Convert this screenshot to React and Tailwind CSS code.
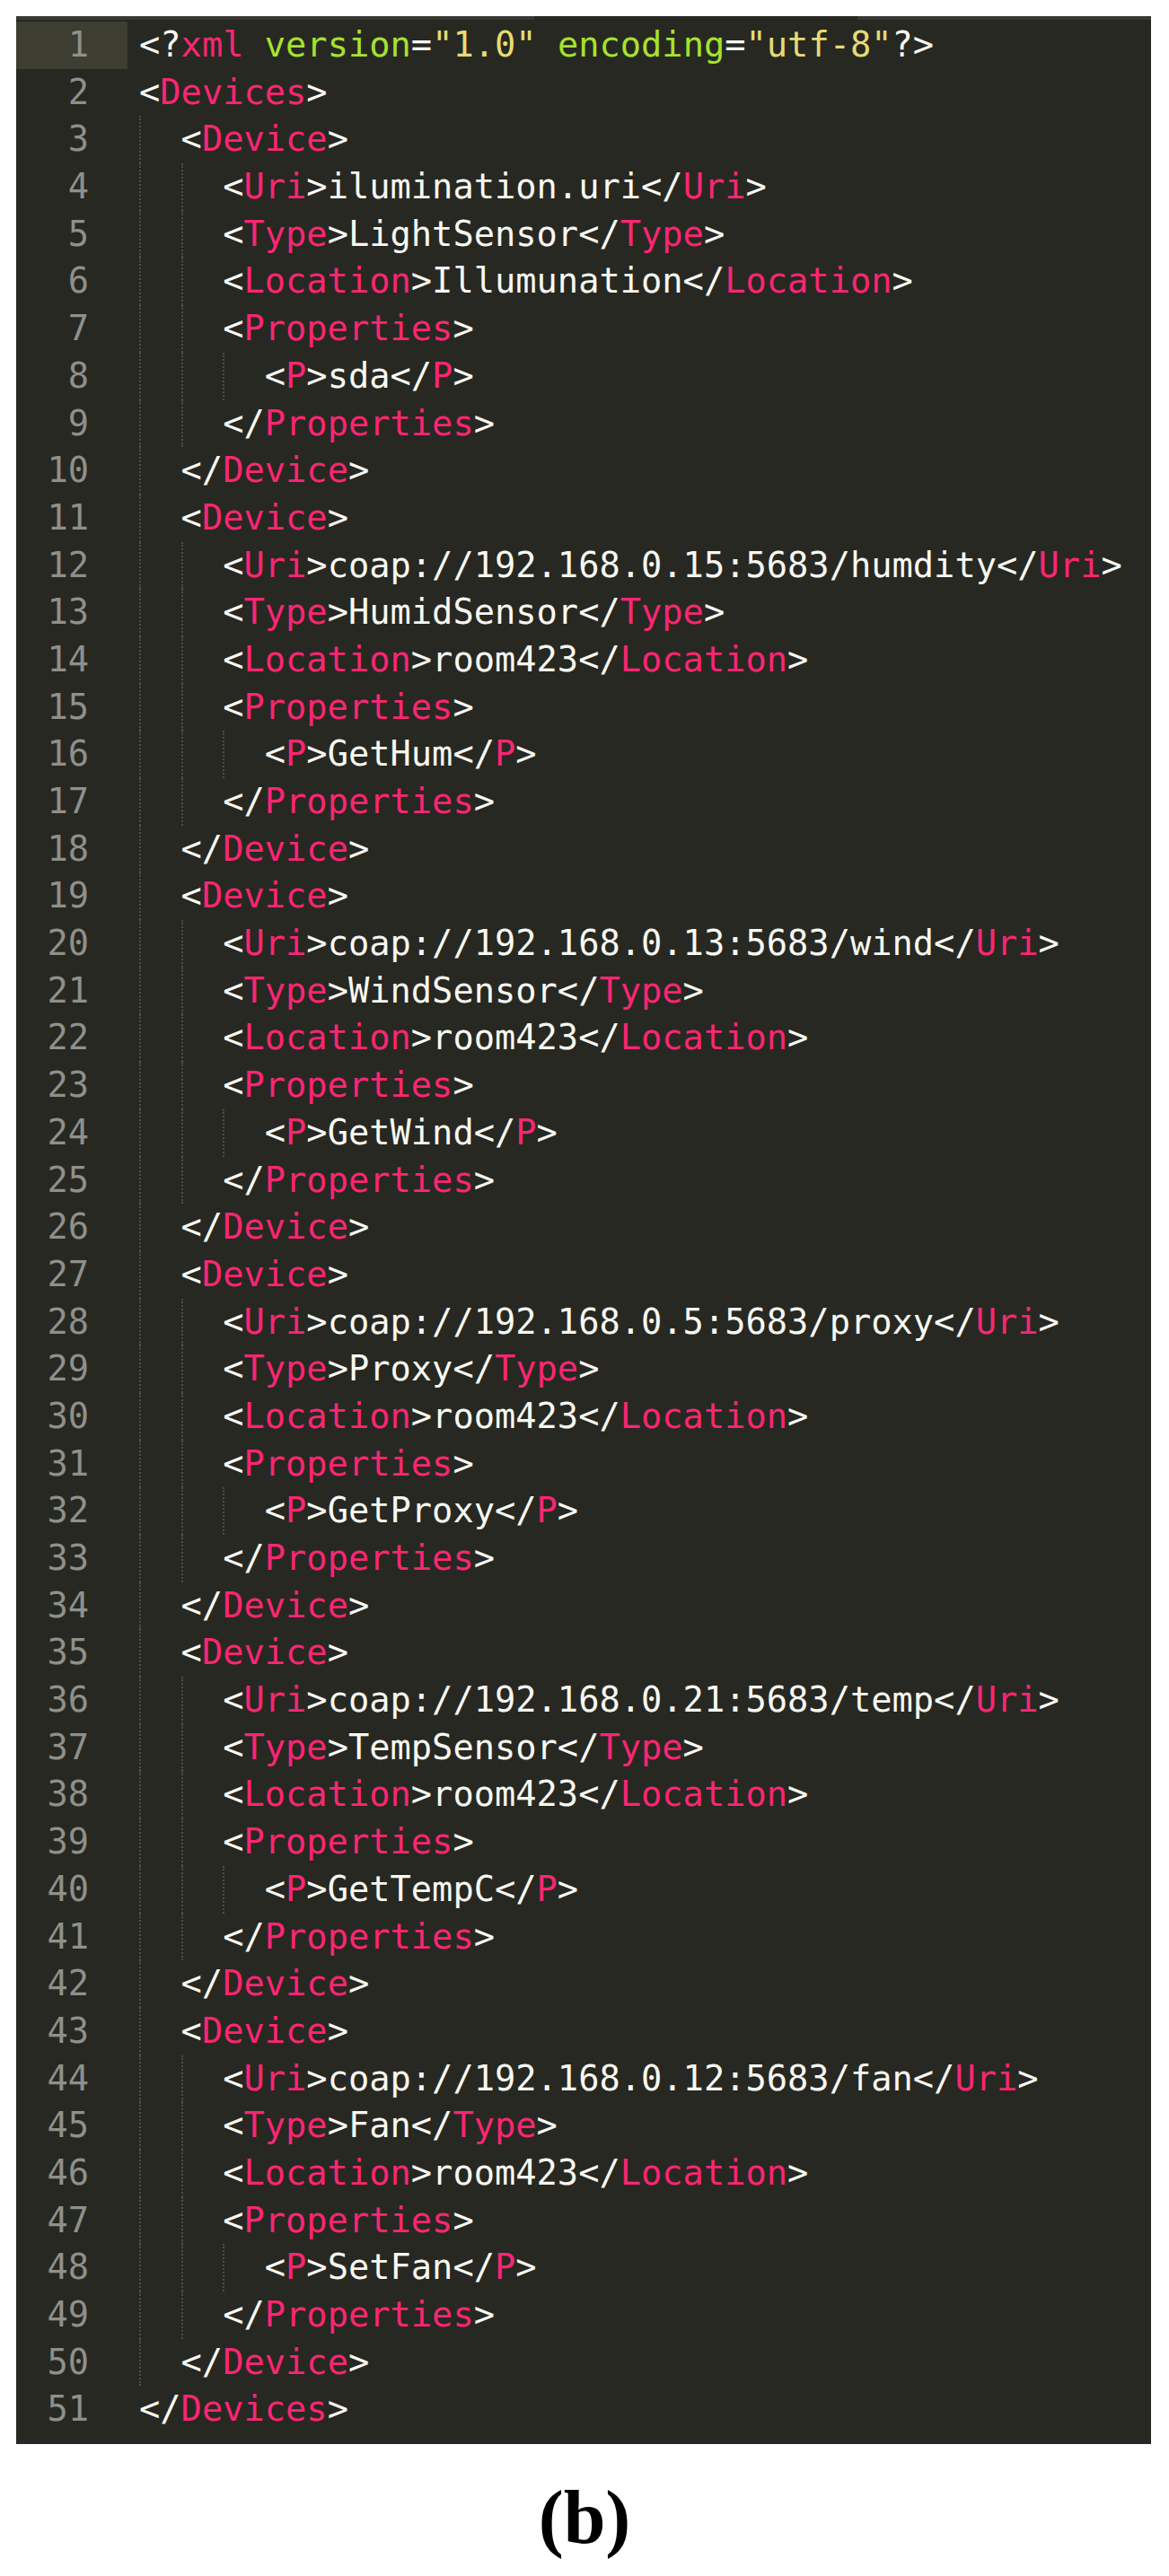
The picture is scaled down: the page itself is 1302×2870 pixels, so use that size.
const PINK = "text-[#F92672]";
const FG = "text-[#F8F8F2]";
const GREEN = "text-[#A6E22E]";
const YELLOW = "text-[#E6DB74]";

// [depth, source]
const LINES = [
  [0, "<Devices>"],
  [1, "<Device>"],
  [2, "<Uri>ilumination.uri</Uri>"],
  [2, "<Type>LightSensor</Type>"],
  [2, "<Location>Illumunation</Location>"],
  [2, "<Properties>"],
  [3, "<P>sda</P>"],
  [2, "</Properties>"],
  [1, "</Device>"],
  [1, "<Device>"],
  [2, "<Uri>coap://192.168.0.15:5683/humdity</Uri>"],
  [2, "<Type>HumidSensor</Type>"],
  [2, "<Location>room423</Location>"],
  [2, "<Properties>"],
  [3, "<P>GetHum</P>"],
  [2, "</Properties>"],
  [1, "</Device>"],
  [1, "<Device>"],
  [2, "<Uri>coap://192.168.0.13:5683/wind</Uri>"],
  [2, "<Type>WindSensor</Type>"],
  [2, "<Location>room423</Location>"],
  [2, "<Properties>"],
  [3, "<P>GetWind</P>"],
  [2, "</Properties>"],
  [1, "</Device>"],
  [1, "<Device>"],
  [2, "<Uri>coap://192.168.0.5:5683/proxy</Uri>"],
  [2, "<Type>Proxy</Type>"],
  [2, "<Location>room423</Location>"],
  [2, "<Properties>"],
  [3, "<P>GetProxy</P>"],
  [2, "</Properties>"],
  [1, "</Device>"],
  [1, "<Device>"],
  [2, "<Uri>coap://192.168.0.21:5683/temp</Uri>"],
  [2, "<Type>TempSensor</Type>"],
  [2, "<Location>room423</Location>"],
  [2, "<Properties>"],
  [3, "<P>GetTempC</P>"],
  [2, "</Properties>"],
  [1, "</Device>"],
  [1, "<Device>"],
  [2, "<Uri>coap://192.168.0.12:5683/fan</Uri>"],
  [2, "<Type>Fan</Type>"],
  [2, "<Location>room423</Location>"],
  [2, "<Properties>"],
  [3, "<P>SetFan</P>"],
  [2, "</Properties>"],
  [1, "</Device>"],
  [0, "</Devices>"],
];

// split a line into tag / text tokens
const tokenize = (src) => {
  const out = [];
  const re = /(<\/?)([A-Za-z]+)(>)|([^<]+)/g;
  let m;
  while ((m = re.exec(src))) {
    if (m[2]) {
      out.push([FG, m[1]], [PINK, m[2]], [FG, m[3]]);
    } else {
      out.push([FG, m[4]]);
    }
  }
  return out;
};

const Gutter = ({ n, active }) => (
  <div
    className={`w-[124px] shrink-0 text-right pr-[43px] text-[#8F908A] ${
      active ? "bg-[#3E3D32]" : ""
    }`}
  >
    {n}
  </div>
);

const XmlDecl = () => (
  <span className="whitespace-pre">
    <span className={FG}>{"<?"}</span>
    <span className={PINK}>xml</span>
    <span className={FG}> </span>
    <span className={GREEN}>version</span>
    <span className={FG}>=</span>
    <span className={YELLOW}>"1.0"</span>
    <span className={FG}> </span>
    <span className={GREEN}>encoding</span>
    <span className={FG}>=</span>
    <span className={YELLOW}>"utf-8"</span>
    <span className={FG}>{"?>"}</span>
  </span>
);

const CodeLine = ({ depth, src }) => (
  <div className="flex h-full items-stretch">
    {Array.from({ length: depth }).map((_, i) => (
      <span
        key={i}
        className="w-[2ch] shrink-0 border-l-2 border-dotted border-[#4d4d46]"
      />
    ))}
    <span className="self-center whitespace-pre">
      {tokenize(src).map(([cls, text], i) => (
        <span key={i} className={cls}>
          {text}
        </span>
      ))}
    </span>
  </div>
);

export default function App() {
  return (
    <div className="bg-white min-h-[2870px] pt-[18px] px-[18px]">
      <div
        className="bg-[#272822] w-[1264px] h-[2705px] pb-[11px] text-[38.7px]"
        style={{ fontFamily: '"DejaVu Sans Mono", monospace' }}
      >
        <div className="flex h-[4px]">
          <div className="w-[577px] bg-[#393934]" />
          <div className="w-[360px]" />
          <div className="flex-1 bg-[#393934]" />
        </div>
        <div className="pt-[2px]">
          <div className="flex h-[52.7px] items-stretch leading-[52.7px]">
            <Gutter n={1} active />
            <div className="pl-[13px]">
              <XmlDecl />
            </div>
          </div>
          {LINES.map(([depth, src], i) => (
            <div
              key={i}
              className="flex h-[52.7px] items-stretch leading-[52.7px]"
            >
              <Gutter n={i + 2} />
              <div className="pl-[13px]">
                <CodeLine depth={depth} src={src} />
              </div>
            </div>
          ))}
        </div>
      </div>
      <div
        className="mt-[40px] text-center text-[84px] leading-none font-bold text-black"
        style={{ fontFamily: '"Liberation Serif", serif' }}
      >
        (b)
      </div>
    </div>
  );
}
